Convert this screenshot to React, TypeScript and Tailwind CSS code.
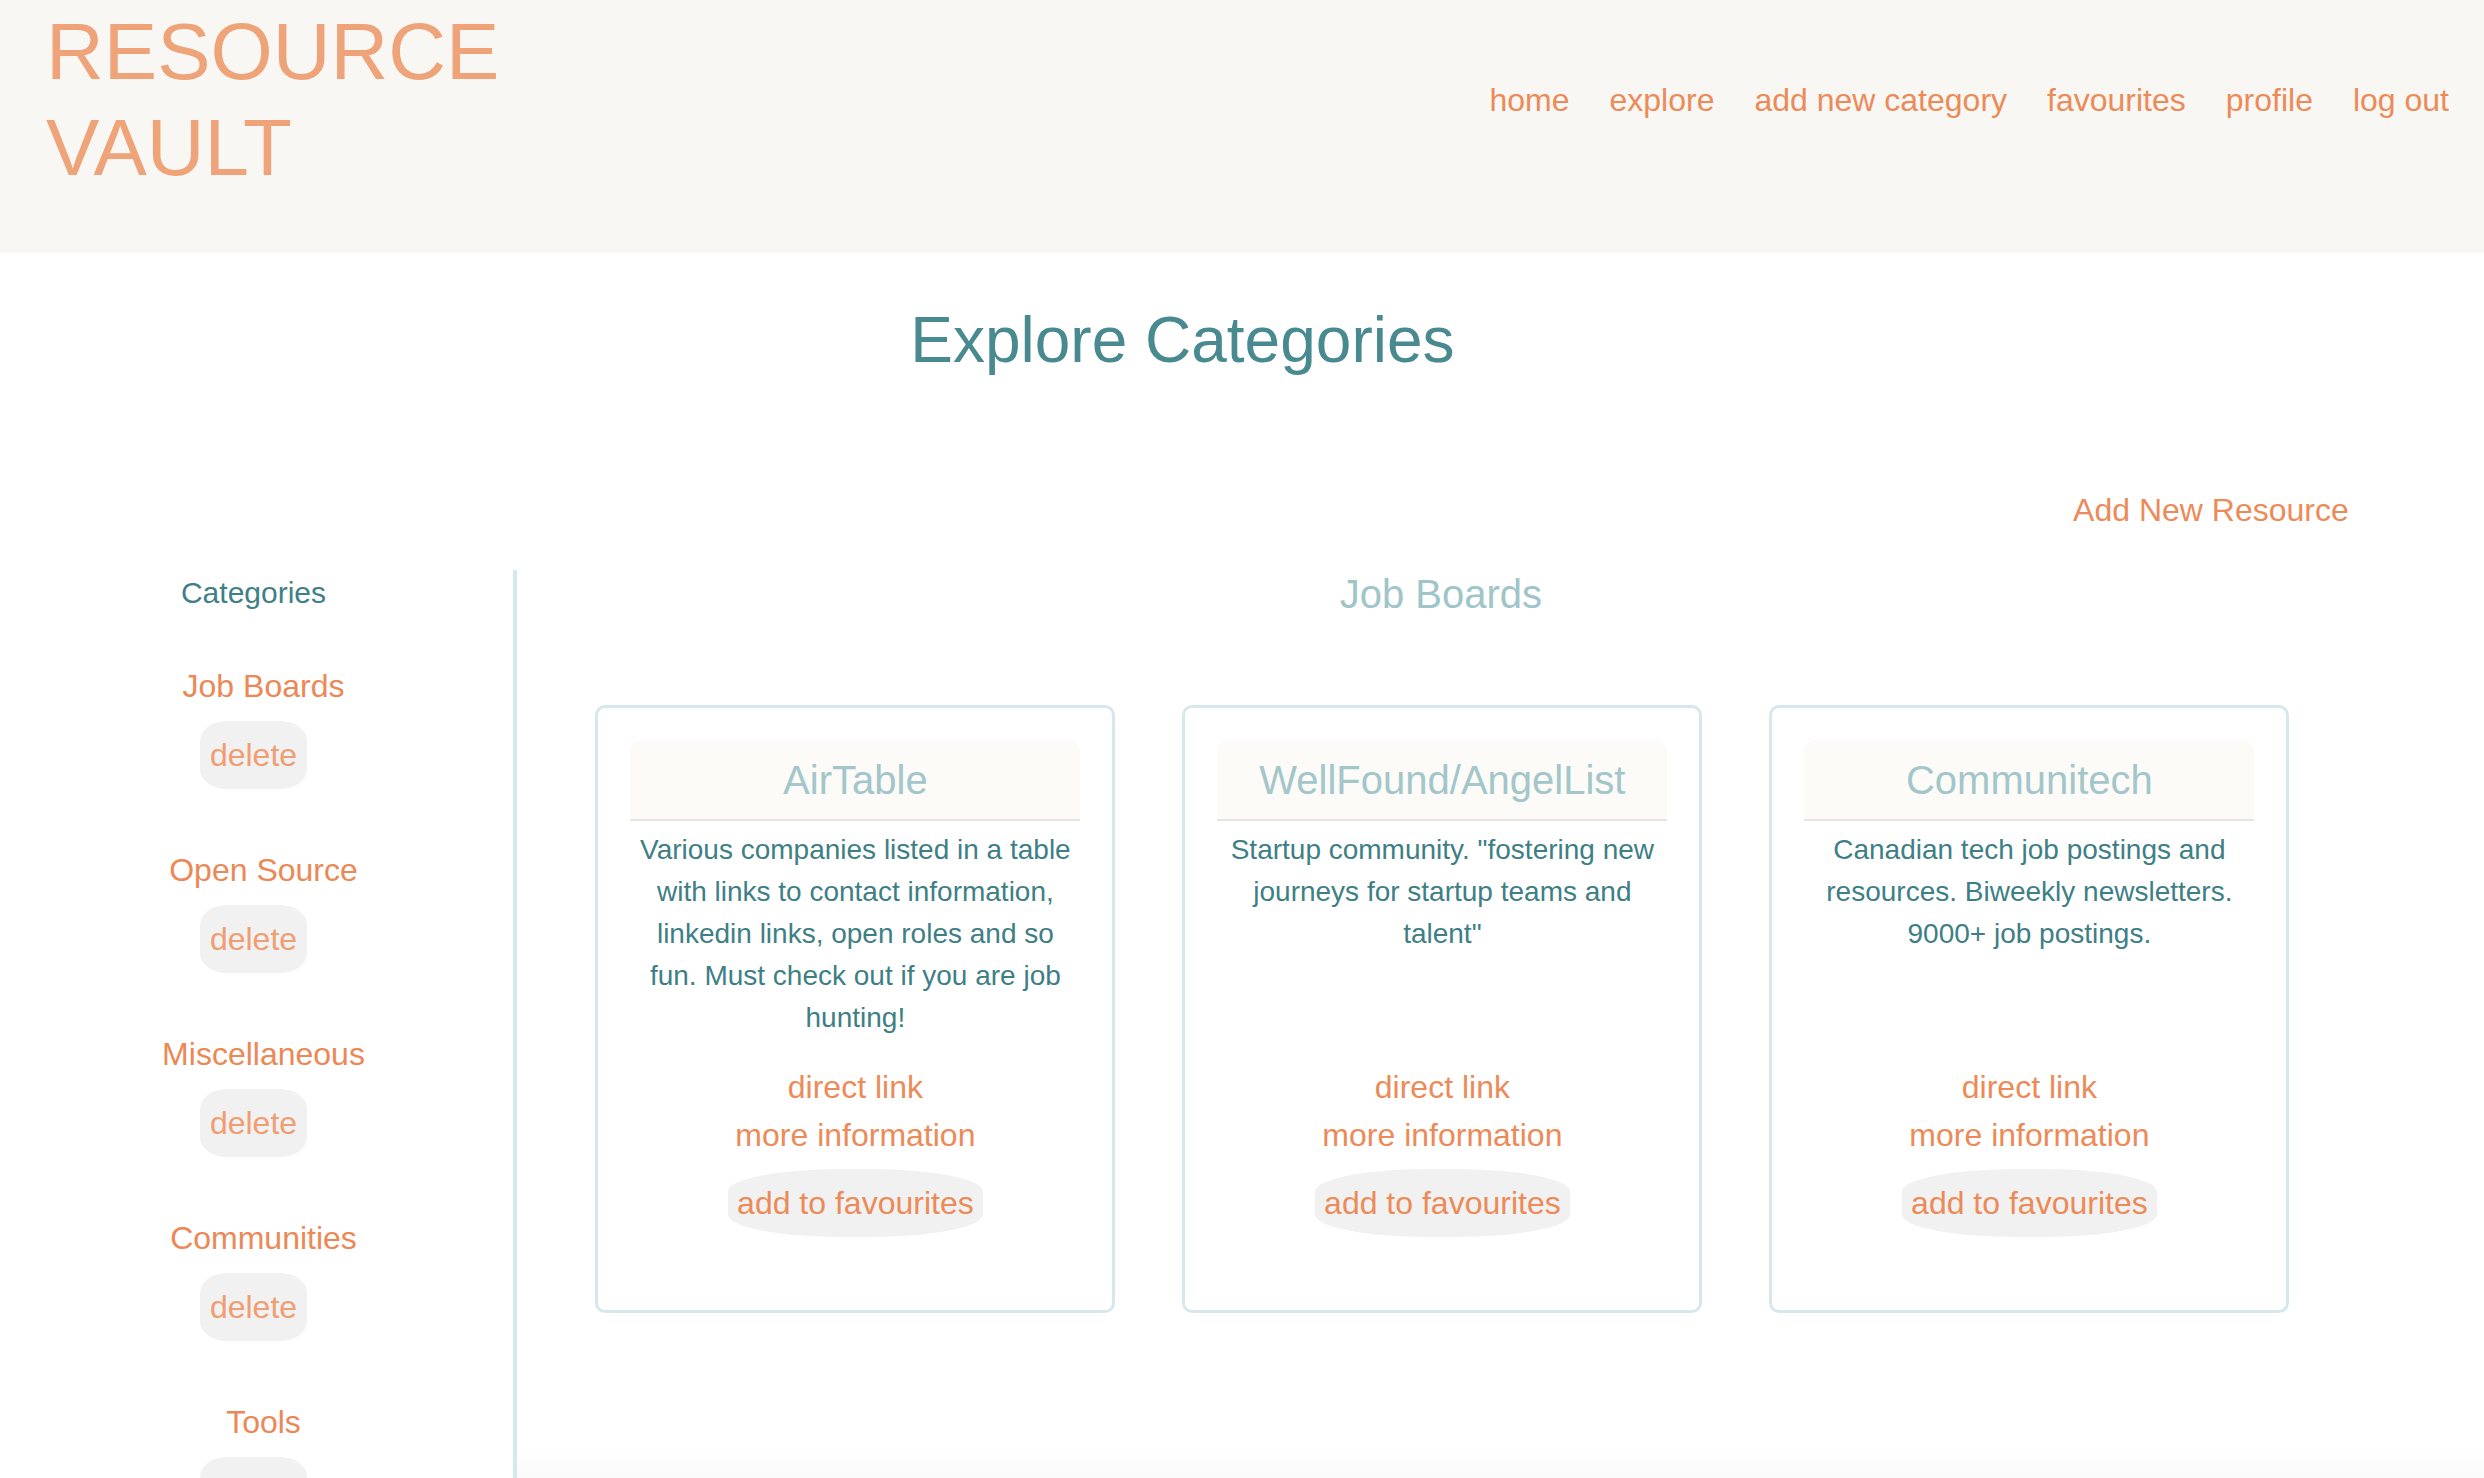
import React from "react";

const cards = [
  {
    title: "AirTable",
    desc: "Various companies listed in a table with links to contact information, linkedin links, open roles and so fun. Must check out if you are job hunting!",
  },
  {
    title: "WellFound/AngelList",
    desc: 'Startup community. "fostering new journeys for startup teams and talent"',
  },
  {
    title: "Communitech",
    desc: "Canadian tech job postings and resources. Biweekly newsletters. 9000+ job postings.",
  },
];

const categories = ["Job Boards", "Open Source", "Miscellaneous", "Communities", "Tools"];

export default function App() {
  return (
    <div className="w-full min-h-screen bg-white overflow-hidden font-['Liberation_Sans',Arial,sans-serif]">
      <header className="h-[253px] bg-[#f9f7f3] flex justify-between">
        <div className="pl-[46px] pt-[4px] text-[80px] leading-[96px] text-[#eea379]">
          <div>RESOURCE</div>
          <div>VAULT</div>
        </div>
        <nav className="flex gap-[40px] pr-[35px] pt-[82px] text-[32px] leading-[37px] text-[#ec8a58] items-start">
          <span>home</span>
          <span>explore</span>
          <span>add new category</span>
          <span>favourites</span>
          <span>profile</span>
          <span>log out</span>
        </nav>
      </header>

      <div className="w-[95.2%]">
        <h1 className="mt-[50px] text-center text-[64px] leading-[74px] text-[#498a91]">
          Explore Categories
        </h1>
        <div className="flex justify-end pr-[16px] mt-[115px]">
          <span className="text-[32px] leading-[37px] text-[#ec8a58]">Add New Resource</span>
        </div>

        <div className="flex mt-[41px]">
          <aside className="w-[507px] mr-[6px] shrink-0 flex flex-col items-center pt-[5px]">
            <div className="text-[30px] leading-[35px] text-[#3f8088]">Categories</div>
            <div className="flex flex-col items-center mt-[58px] gap-[63px]">
              {categories.map((c) => (
                <div key={c} className="flex flex-col items-center">
                  <span className="pl-[20px] text-[32px] leading-[37px] text-[#ec8856]">{c}</span>
                  <button className="mt-[16px] bg-[#f1f1f1] rounded-[27px/20px] px-[10px] py-[15px] text-[32px] leading-[38px] text-[#ef9d71]">
                    delete
                  </button>
                </div>
              ))}
            </div>
          </aside>

          <main className="flex-1 border-l-4 border-[#d5e8ec] flex flex-col items-center">
            <h2 className="mt-[1px] text-[40px] leading-[46px] text-[#a0c5c9]">Job Boards</h2>
            <div className="mt-[88px] ml-[3px] flex gap-[67px]">
              {cards.map((card) => (
                <div
                  key={card.title}
                  className="w-[520px] h-[608px] border-[3px] border-[#d6e8ec] rounded-[10px] px-[31px] pt-[32px] flex flex-col items-center"
                >
                  <div className="w-[450px] h-[81px] bg-[#fcfbf8] rounded-t-[10px] border-b-2 border-[#e6e4e0] flex items-center justify-center">
                    <span className="text-[40px] leading-[46px] text-[#a2c6ca]">{card.title}</span>
                  </div>
                  <p className="mt-[8px] w-[450px] h-[234px] text-center text-[28px] leading-[42px] text-[#3e7f86]">
                    {card.desc}
                  </p>
                  <div className="flex flex-col items-center text-[32px] leading-[48px] text-[#ec8a58]">
                    <span>direct link</span>
                    <span>more information</span>
                  </div>
                  <button className="mt-[10px] bg-[#f1f1f1] rounded-[45%/33%] px-[9px] py-[15px] text-[32px] leading-[38px] text-[#ec8a58]">
                    add to favourites
                  </button>
                </div>
              ))}
            </div>
            <div className="mt-[135px] self-stretch mr-[-130px] h-[40px] bg-gradient-to-b from-white to-[#f8f8f8]" />
          </main>
        </div>
      </div>
    </div>
  );
}
